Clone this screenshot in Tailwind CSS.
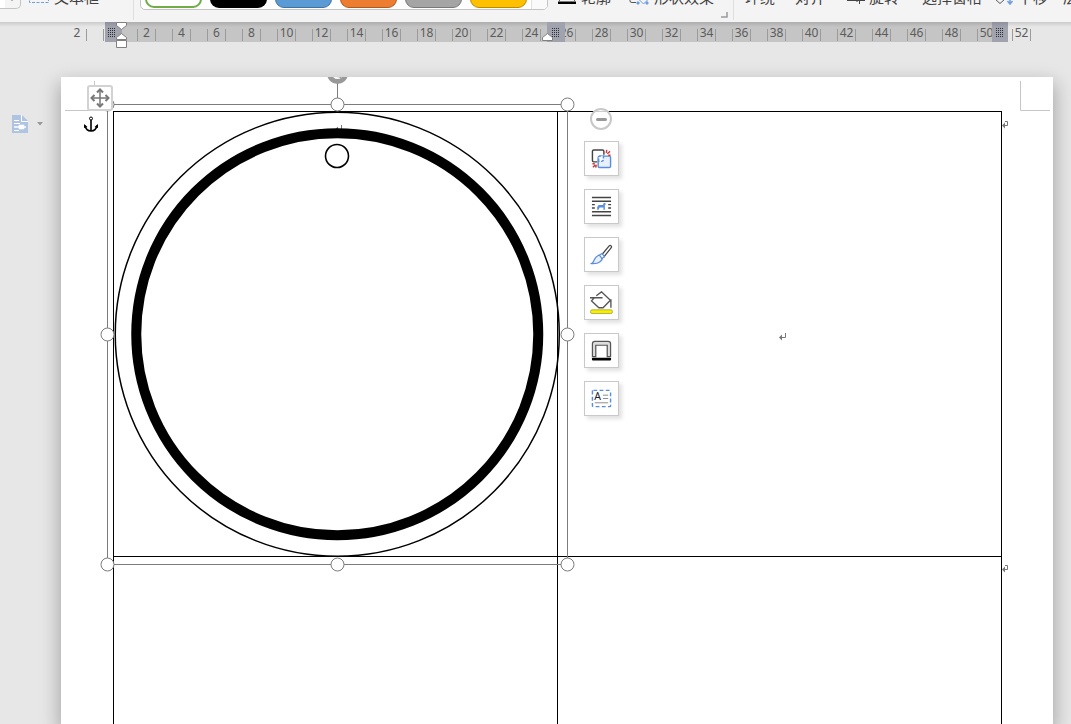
<!DOCTYPE html>
<html lang="zh-CN">
<head>
<meta charset="utf-8">
<meta name="viewport" content="width=device-width, initial-scale=1">
<title>文档</title>
<script src="https://cdn.jsdelivr.net/npm/@tailwindcss/browser@4"></script>
</head>
<body class="flex h-screen flex-col overflow-hidden bg-[#e7e7e7] font-['Noto_Sans','Noto_Sans_CJK_SC',sans-serif] text-[#404040]">

<!-- Ribbon, scrolled so that only its lower edge shows -->
<header class="relative z-10 flex h-[22px] shrink-0 items-start overflow-hidden bg-[#f4f4f4] text-[15px] leading-5 whitespace-nowrap">
  <button aria-label="更多" class="-mt-4 flex h-[25px] w-[21px] shrink-0 items-end justify-end rounded-br-[5px] border-r border-b border-[#c4c4c4] bg-[linear-gradient(90deg,#fff_5px,#f4f4f4_5px)] pr-1">
    <svg class="mb-1.5" width="8" height="4" viewBox="0 0 8 4"><path d="M1 0h6L4 3z" fill="#777"/></svg>
  </button>
  <button class="-mt-[13px] ml-2 flex shrink-0 items-start gap-[5px]">
    <svg class="w-5" height="20" viewBox="0 0 20 20"><path d="M.5 0v15.500h19V0" fill="none" stroke="#6f9de0" stroke-dasharray="3 1.5"/></svg>
    <span>文本框</span>
  </button>
  <div class="ml-[34px] h-5 w-px shrink-0 bg-[#dedede]"></div>
  <div class="-mt-6 ml-1.5 flex h-[34px] w-[408px] shrink-0 gap-2 rounded-[5px] border border-[#c4c4c4] bg-white pl-1">
    <button aria-label="白色" class="h-[31px] w-[57px] rounded-[9px] border-2 border-[#70ad47] bg-white"></button>
    <button aria-label="黑色" class="h-[31px] w-[57px] rounded-[9px] bg-black"></button>
    <button aria-label="蓝色" class="h-[31px] w-[57px] rounded-[9px] border border-[#41719c] bg-[#5b9bd5]"></button>
    <button aria-label="橙色" class="h-[31px] w-[57px] rounded-[9px] border border-[#ae5a21] bg-[#ed7d31]"></button>
    <button aria-label="灰色" class="h-[31px] w-[57px] rounded-[9px] border border-[#787878] bg-[#a5a5a5]"></button>
    <button aria-label="金色" class="h-[31px] w-[57px] rounded-[9px] border border-[#bc8c00] bg-[#ffc000]"></button>
    <button aria-label="更多样式" class="-ml-1 h-8 flex-1 rounded-r border-l border-[#e2e2e2] bg-[#fafafa]"></button>
  </div>
  <button class="-mt-[13px] ml-[10px] flex shrink-0 items-start gap-[5px]">
    <svg class="w-[18px]" height="20" viewBox="0 0 18 20"><path d="M1.500 0v14M16.500 0v14" stroke="#666"/><path d="M0 14.500h18v2.500H0z" fill="#000"/></svg>
    <span>轮廓</span>
  </button>
  <button class="-mt-[13px] ml-[18px] flex shrink-0 items-start gap-[5px]">
    <svg class="w-5" height="20" viewBox="0 0 20 20" fill="none"><path d="M1 9v5q0 1.500 2 1.500h4" stroke="#555"/><path d="M14.500 9l4 4-4 4-4-4z" stroke="#6f9de0"/><path d="M9 14l2 2-2 2-2-2zM18 14l2 2-2 2-2-2z" fill="#6f9de0"/></svg>
    <span>形状效果</span>
  </button>
  <svg class="mt-3 ml-[7px] shrink-0" width="7" height="6" viewBox="0 0 7 6"><path d="M6 0v5H0" fill="none" stroke="#999" stroke-width="1.500"/></svg>
  <div class="ml-[5px] h-5 w-px shrink-0 bg-[#dedede]"></div>
  <button class="-mt-[13px] ml-[11px] shrink-0">环绕</button>
  <button class="-mt-[13px] ml-5 shrink-0">对齐</button>
  <button class="-mt-[13px] ml-[22px] flex shrink-0 items-start gap-1">
    <svg class="w-[18px]" height="20" viewBox="0 0 18 20" fill="none" stroke="#444"><path d="M0 13.500h18M12.500 13v4M10 11v4"/></svg>
    <span>旋转</span>
  </button>
  <button class="-mt-[13px] ml-[23px] shrink-0">选择窗格</button>
  <button class="-mt-[13px] ml-3 flex shrink-0 items-start gap-1">
    <svg class="w-5" height="20" viewBox="0 0 20 20" fill="none"><path d="M1 12l5 4.500 5-4.500" stroke="#555"/><path d="M16 8v9M13.500 14l2.500 3 2.500-3" stroke="#6f9de0" stroke-width="1.500"/></svg>
    <span>下移一层</span>
  </button>
</header>

<!-- Ruler -->
<div id="ruler" class="relative flex h-5 shrink-0 text-xs leading-[22px] text-[#5c5c5c]">
  <div class="flex w-[105px] shrink-0 pl-[68px]">
    <div class="w-[18px] text-center">2</div>
    <div class="mt-[7px] h-3 w-[18px] border-x border-[#9b9b9b]"></div>
  </div>
  <div class="w-[17px] shrink-0 bg-[#a0a3ae]"></div>
  <div id="scale" class="flex w-[870px] shrink-0 overflow-hidden bg-[#c5c5c5] pl-[15px]"></div>
  <div class="w-4 shrink-0 bg-[#a0a3ae]"></div>
  <div class="flex flex-1 pl-1">
    <div class="mt-[7px] h-3 w-px bg-[#9b9b9b]"></div>
    <div class="flex w-[17px] justify-center">52</div>
    <div class="mt-[7px] h-3 w-px bg-[#9b9b9b]"></div>
  </div>
  <div class="absolute inset-x-0 top-0 h-[5px] bg-linear-to-b from-black/12 to-transparent"></div>
  <svg class="absolute top-0 left-0" width="1020" height="27" viewBox="0 22 1020 27">
    <defs><pattern id="dots" width="2" height="2" patternUnits="userSpaceOnUse"><path d="M0 0h1v1H0z" fill="#2e3038"/></pattern></defs>
    <path d="M547 22h18v20h-18z" fill="#a0a3ae"/>
    <path d="M108 28h8v9h-8zM552 28h8v9h-8zM996 28h8v9h-8z" fill="url(#dots)"/>
    <g fill="#fff" stroke="#808080"><path d="M116.500 22.500h10v3l-5 4-5-4z"/><path d="M116.500 39.500v-2l5-4 5 4v2z"/><path d="M116.500 40.500h10v7h-10z"/><path d="M542.500 40.500v-3l5-4 5 4v3z"/></g>
  </svg>
</div>

<main class="flex min-h-0 flex-1 overflow-hidden pt-[35px]">
  <aside class="w-[61px] shrink-0 pt-[38px] pl-3">
    <button aria-label="页面选项" class="flex items-center gap-[9px]">
      <svg width="16" height="18" viewBox="0 0 16 18"><path d="M0 0h10l6 6v12H0z" fill="#afc3e2"/><path d="M9.500 0v6.500H16M2 5.500h5M2 8.500h6M2 15.500h5" fill="none" stroke="#fff"/><path d="M2 12h12M7.500 10.500h4v3h-4z" fill="none" stroke="#fff" stroke-width="1.500"/></svg>
      <svg width="6" height="4" viewBox="0 0 6 4"><path d="M0 0h6L3 3.500z" fill="#999"/></svg>
    </button>
  </aside>

  <section aria-label="页面" class="relative mr-[18px] flex-1 bg-white pt-[34px] pr-[51px] pl-[52px] shadow-[0_8px_18px_2px_rgba(0,0,0,0.28)]">
    <table class="w-full table-fixed border-collapse">
      <tbody>
        <tr class="h-[445px]"><td class="border border-black"></td><td class="border border-black"></td></tr>
        <tr class="h-[445px]"><td class="border border-black"></td><td class="border border-black"></td></tr>
      </tbody>
    </table>

    <!-- Drawing layer: crop marks, paragraph marks, shapes and selection frame -->
    <svg class="absolute top-0 left-0" width="992" height="647" viewBox="61 77 992 647" fill="none">
      <path d="M94.500 81v29M65 110.500h29M1020.500 81v29.500H1050" stroke="#c6c6c6"/>
      <defs><g id="mark"><path d="M6.500 0v4.500H1" stroke="#777"/><path d="M0 4.500l3-3v6z" fill="#777"/></g></defs>
      <use href="#mark" x="335" y="125"/>
      <use href="#mark" x="779" y="333"/>
      <g id="rowend"><path d="M1005 121.500h2.500v4H1004" stroke="#777"/><path d="M1002 125.500l3-3v6z" fill="#777"/></g>
      <use href="#rowend" y="444"/>
      <g stroke="#000">
        <circle cx="337.250" cy="334.250" r="222" stroke-width="1.500"/>
        <circle cx="337.250" cy="334.250" r="201" stroke-width="10"/>
        <circle cx="337" cy="156" r="11.500" stroke-width="1.600"/>
      </g>
      <path d="M107.500 104.500h460v460h-460zM337.500 83v20" stroke="#7c7c7c"/>
      <circle cx="337.500" cy="73.500" r="8" stroke="#999" stroke-width="5"/>
      <path d="M337 77l4 1v-3z" fill="#999"/>
      <g fill="#fff" stroke="#7c7c7c">
        <circle cx="107.500" cy="104.500" r="6.500"/><circle cx="337.500" cy="104.500" r="6.500"/><circle cx="567.500" cy="104.500" r="6.500"/>
        <circle cx="107.500" cy="334.500" r="6.500"/><circle cx="567.500" cy="334.500" r="6.500"/>
        <circle cx="107.500" cy="564.500" r="6.500"/><circle cx="337.500" cy="564.500" r="6.500"/><circle cx="567.500" cy="564.500" r="6.500"/>
      </g>
      <g stroke="#000"><circle cx="91" cy="118.500" r="1.500"/><path d="M91 120v11" stroke-width="1.600"/><path d="M85 125.500q1 5.500 6 5.500t6-5.500" stroke-width="1.600"/><path d="M84 128v-4l3.500 3zM98 128v-4l-3.500 3z" fill="#000" stroke="none"/></g>
    </svg>

    <button aria-label="移动表格" class="absolute top-2 left-[26px] flex size-[26px] items-center justify-center rounded-[3px] border-2 border-[#d2d2d2] bg-white">
      <svg class="shrink-0" width="20" height="20" viewBox="0 0 20 20"><path d="M10 2v16M2 10h16" stroke="#777" stroke-width="1.500"/><path d="M7 4.500L10 1.500l3 3M7 15.500l3 3 3-3M4.500 7l-3 3 3 3M15.500 7l3 3-3 3" fill="none" stroke="#777" stroke-width="2"/></svg>
    </button>

    <div role="toolbar" aria-label="形状工具" class="absolute top-[31px] left-[523px] flex flex-col gap-[13px]">
      <button aria-label="收起" class="-mb-0.5 ml-1.5 flex size-[22px] items-center justify-center rounded-full border-2 border-[#c8c8c8] bg-white/80"><span class="h-[3px] w-[11px] rounded-full bg-[#999]"></span></button>
      <button aria-label="组合" class="flex size-[35px] items-center justify-center border border-[#c9c9c9] bg-white shadow-[3px_3px_4px_rgba(0,0,0,0.12)]">
        <svg width="21" height="21" viewBox="0 0 22 22" fill="none" stroke-width="1.500"><rect x="7.500" y="8.500" width="13" height="12" rx="1.500" fill="#e8f0fc" stroke="#5b8ddd"/><path d="M6.500 14.500H3q-1.500 0-1.500-1.500V3.500Q1.500 2 3 2h9q1.500 0 1.500 1.500V7" stroke="#444"/><path d="M8 14v-4q0-1.500 1.500-1.500H13v3.500q0 2-2 2z" fill="#fff" stroke="#5b8ddd" stroke-dasharray="3 1.500"/><path d="M16 5l.5-3M17 6l3-2.500M18 7.500h2.500M1.500 16.500H4M2 20l2.500-2M5 20.500l.5-3" stroke="#d43a3a"/></svg>
      </button>
      <button aria-label="环绕方式" class="flex size-[35px] items-center justify-center border border-[#c9c9c9] bg-white shadow-[3px_3px_4px_rgba(0,0,0,0.12)]">
        <svg width="21" height="21" viewBox="0 0 22 22" fill="none"><path d="M1 1.500h20M1 5.500h20M1 16.500h20M1 20.500h20M1 9h3M1 12.500h3M18 9h3M18 12.500h3" stroke="#444" stroke-width="1.500"/><path d="M6.500 14.500v-3l1.500-2h4.500L13.500 7l1.500.5 1 1.500h-1.500v5.500H13V12H9l-1 2.500z" fill="#5b8ddd"/></svg>
      </button>
      <button aria-label="格式刷" class="flex size-[35px] items-center justify-center border border-[#c9c9c9] bg-white shadow-[3px_3px_4px_rgba(0,0,0,0.12)]">
        <svg width="23" height="23" viewBox="0 0 24 24" fill="none" stroke-width="1.300"><path d="M12.500 12L20 3q1-1 2 0t0 2l-7.500 9.500z" stroke="#444"/><path d="M1.500 21.500q2-1 3-4t4-4.500q3-.5 4 2t-2 4.500q-3 2.500-9 2z" fill="#e8f0fc" stroke="#5b8ddd"/><path d="M10 12.500l2.500-1.500 2.500 3-2.500 2.500z" fill="#fff" stroke="#5b8ddd"/></svg>
      </button>
      <button aria-label="填充" class="flex size-[35px] items-center justify-center border border-[#c9c9c9] bg-white shadow-[3px_3px_4px_rgba(0,0,0,0.12)]">
        <svg width="23" height="23" viewBox="0 0 22 22" fill="none"><path d="M6 4.500L11 .800l8.500 8L12.500 16H8.500L1.500 9.500 4 6.500M0 6.500h12M20 8v8" stroke="#555" stroke-width="1.300"/><rect x=".5" y="18" width="21" height="3.500" rx="1.500" fill="#f7f000" stroke="#aaa43c" stroke-width=".8"/></svg>
      </button>
      <button aria-label="轮廓颜色" class="flex size-[35px] items-center justify-center border border-[#c9c9c9] bg-white shadow-[3px_3px_4px_rgba(0,0,0,0.12)]">
        <svg width="21" height="21" viewBox="0 0 22 22" fill="none"><path d="M1.500 17.500V4q0-2.500 2.500-2.500h14q2.500 0 2.500 2.500v13.500h-3.500v-12H5v12z" fill="#ddd" stroke="#555" stroke-width="1.300"/><rect x="1" y="18.500" width="20" height="3" rx="1" fill="#000"/></svg>
      </button>
      <button aria-label="文本框" class="flex size-[35px] items-center justify-center border border-[#c9c9c9] bg-white shadow-[3px_3px_4px_rgba(0,0,0,0.12)]">
        <svg width="21" height="21" viewBox="0 0 22 22" fill="none"><rect x="1.500" y="2.500" width="19" height="17" rx="1" stroke="#5b8ddd" stroke-width="1.500" stroke-dasharray="4 2.500"/><path d="M12.500 7.500H18M12.500 11H18M4 15.500h14" stroke="#888"/><text x="3.500" y="13" font-size="11" font-family="Noto Sans" fill="#222">A</text></svg>
      </button>
    </div>
  </section>
</main>

<script>
  const scale = document.getElementById('scale');
  for (let n = 2; n <= 50; n += 2) {
    scale.insertAdjacentHTML('beforeend',
      `<div class="flex w-[35px] shrink-0"><div class="mt-[7px] h-3 w-px bg-[#9b9b9b]"></div><div class="flex w-[17px] justify-center">${n}</div><div class="mt-[7px] h-3 w-px bg-[#9b9b9b]"></div></div>`);
  }
</script>
</body>
</html>
